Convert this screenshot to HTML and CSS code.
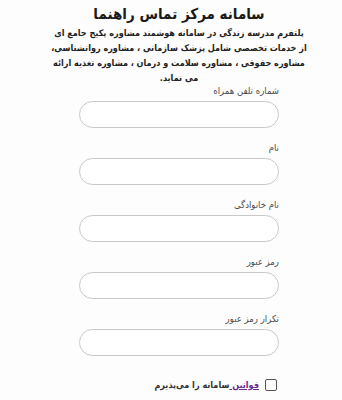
FILE: index.html
```html
<!DOCTYPE html>
<html lang="fa" dir="rtl">
<head>
    <meta charset="UTF-8">
    <meta name="viewport" content="width=device-width, initial-scale=1.0">
    <title>سامانه مرکز تماس راهنما</title>
    <link rel="stylesheet" href="styles.css">
</head>
<body>
    <div class="page">
        <div class="intro">
            <h1>سامانه مرکز تماس راهنما</h1>
            <p>پلتفرم مدرسه زندگی در سامانه هوشمند مشاوره پکیج جامع ای<br>
            از خدمات تخصصی شامل پزشک سازمانی ، مشاوره روانشناسی،<br>
            مشاوره حقوقی ، مشاوره سلامت و درمان ، مشاوره تغذیه ارائه<br>
            می نماید.</p>
        </div>
        <form class="form">
            <div class="field">
                <label>شماره تلفن همراه</label>
                <input type="text" class="input">
            </div>
            <div class="field">
                <label>نام</label>
                <input type="text" class="input">
            </div>
            <div class="field">
                <label>نام خانوادگی</label>
                <input type="text" class="input">
            </div>
            <div class="field">
                <label>رمز عبور</label>
                <input type="password" class="input">
            </div>
            <div class="field">
                <label>تکرار رمز عبور</label>
                <input type="password" class="input">
            </div>
            <label class="terms">
                <span class="box"></span>
                <span><a href="#">قوانین </a>سامانه را می‌پذیرم</span>
            </label>
        </form>
    </div>
</body>
</html>
```

FILE: styles.css
```css
body {
    margin: 0;
    background-color: #fdfdfd;
    color: #222;
    font-family: 'DejaVu Sans Condensed', 'DejaVu Sans', sans-serif;
}

.page {
    width: 252px;
    margin: 0 auto;
    padding-left: 16px;
}

.intro {
    text-align: center;
}

.intro h1 {
    margin: 0;
    padding-top: 3px;
    font-size: 15px;
    line-height: 22px;
    color: #1a1a1a;
}

.intro p {
    margin: 1px -6px 0;
    font-size: 9px;
    font-weight: bold;
    line-height: 15px;
    color: #222;
    white-space: nowrap;
}

.form {
    width: 200px;
    margin: -2px auto 0;
}

.field {
    display: flex;
    flex-direction: column;
    margin-bottom: 13px;
}

.field label {
    font-size: 9.5px;
    line-height: 14px;
    color: #4a4a4a;
    margin-bottom: 3px;
}

.input {
    height: 27px;
    box-sizing: border-box;
    border: 1px solid #c8c8c8;
    border-radius: 14px;
    background: #fff;
    outline: none;
}

.terms {
    display: flex;
    align-items: center;
    gap: 6px;
    margin-top: 23px;
    padding-right: 2px;
    font-size: 9px;
    font-weight: bold;
    color: #333;
}

.box {
    width: 10px;
    height: 10px;
    border: 1px solid #555;
    border-radius: 2px;
    background: #fff;
}

a {
    color: #6b2a8f;
    text-decoration: underline;
}
```
